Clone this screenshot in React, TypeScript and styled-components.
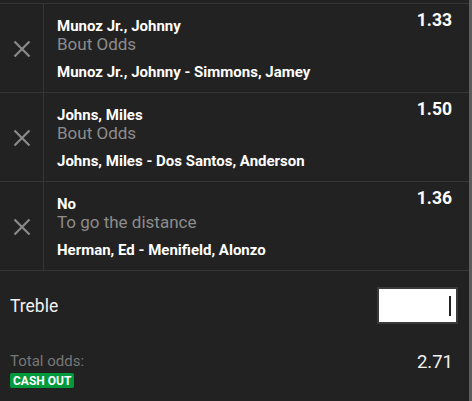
import React from 'react';
import styled, { createGlobalStyle } from 'styled-components';

type Selection = {
  pick: string;
  market: string;
  event: string;
  odds: string;
};

const selections: Selection[] = [
  {
    pick: 'Munoz Jr., Johnny',
    market: 'Bout Odds',
    event: 'Munoz Jr., Johnny - Simmons, Jamey',
    odds: '1.33',
  },
  {
    pick: 'Johns, Miles',
    market: 'Bout Odds',
    event: 'Johns, Miles - Dos Santos, Anderson',
    odds: '1.50',
  },
  {
    pick: 'No',
    market: 'To go the distance',
    event: 'Herman, Ed - Menifield, Alonzo',
    odds: '1.36',
  },
];

const GlobalStyle = createGlobalStyle`
  html, body {
    margin: 0;
    padding: 0;
    background: #222222;
  }
  body {
    font-family: Roboto, 'Liberation Sans', sans-serif;
    color: #f2f2f2;
  }
`;

const CloseIcon = () => (
  <svg width="18" height="18" viewBox="0 0 18 18" fill="none">
    <path d="M1.5 1.5 L16.5 16.5 M16.5 1.5 L1.5 16.5" stroke="#8a8a8a" strokeWidth="2.2" />
  </svg>
);

const App: React.FC = () => {
  return (
    <>
      <GlobalStyle />
      <Frame>
        <Slip>
          <List>
            {selections.map((s) => (
              <Row key={s.event}>
                <RemoveCell>
                  <CloseIcon />
                </RemoveCell>
                <Info>
                  <Head>
                    <Pick>{s.pick}</Pick>
                    <Odds>{s.odds}</Odds>
                  </Head>
                  <Market>{s.market}</Market>
                  <Event>{s.event}</Event>
                </Info>
              </Row>
            ))}
          </List>
          <StakeRow>
            <StakeLabel>Treble</StakeLabel>
            <StakeInput>
              <Caret />
            </StakeInput>
          </StakeRow>
          <Totals>
            <div>
              <TotalLabel>Total odds:</TotalLabel>
              <CashOut>CASH OUT</CashOut>
            </div>
            <TotalValue>2.71</TotalValue>
          </Totals>
        </Slip>
        <Scrollbar />
      </Frame>
    </>
  );
};

const Frame = styled.div`
  display: flex;
  width: 472px;
  height: 401px;
  background: #222222;
  overflow: hidden;
`;

const Slip = styled.div`
  flex: 1;
  padding-top: 3px;
`;

const Scrollbar = styled.div`
  width: 3px;
  background: #5c5c5c;
`;

const List = styled.div`
  border-top: 1px solid #353535;
`;

const Row = styled.div`
  display: grid;
  grid-template-columns: 44px 1fr;
  height: 88px;
  border-bottom: 1px solid #353535;
`;

const RemoveCell = styled.div`
  display: flex;
  align-items: center;
  justify-content: center;
  border-right: 1px solid #353535;
  padding-top: 2px;
`;

const Info = styled.div`
  padding: 6px 17px 0 13px;
`;

const Head = styled.div`
  display: flex;
  justify-content: space-between;
  align-items: flex-start;
`;

const Pick = styled.div`
  margin-top: 8px;
  font-size: 15px;
  line-height: 16px;
  font-weight: 700;
  color: #ffffff;
`;

const Odds = styled.div`
  font-size: 17.5px;
  line-height: 20px;
  font-weight: 700;
  color: #ffffff;
`;

const Market = styled.div`
  margin-top: 1px;
  font-size: 17px;
  line-height: 18px;
  color: #8c8c8c;
`;

const Event = styled.div`
  margin-top: 10px;
  font-size: 15px;
  line-height: 18px;
  font-weight: 700;
  color: #ffffff;
`;

const StakeRow = styled.div`
  display: flex;
  align-items: center;
  justify-content: space-between;
  padding: 16px 11px 0 10px;
`;

const StakeLabel = styled.div`
  font-size: 17.5px;
  color: #f2f2f2;
`;

const StakeInput = styled.div`
  display: flex;
  align-items: center;
  justify-content: flex-end;
  box-sizing: border-box;
  width: 81px;
  height: 37px;
  padding-right: 5px;
  background: #ffffff;
  border: 2px solid #3a3a3a;
`;

const Caret = styled.div`
  width: 2px;
  height: 20px;
  background: #222222;
`;

const Totals = styled.div`
  display: flex;
  justify-content: space-between;
  align-items: flex-start;
  padding: 28px 16px 0 10px;
`;

const TotalLabel = styled.div`
  font-size: 15px;
  line-height: 18px;
  color: #777777;
`;

const CashOut = styled.span`
  display: inline-block;
  margin-top: 2px;
  padding: 1px 3px 0;
  background: #009a3c;
  border-radius: 2px;
  color: #ffffff;
  font-size: 12px;
  line-height: 14px;
  font-weight: 700;
`;

const TotalValue = styled.div`
  font-size: 18.5px;
  line-height: 20px;
  color: #f2f2f2;
`;

export default App;
